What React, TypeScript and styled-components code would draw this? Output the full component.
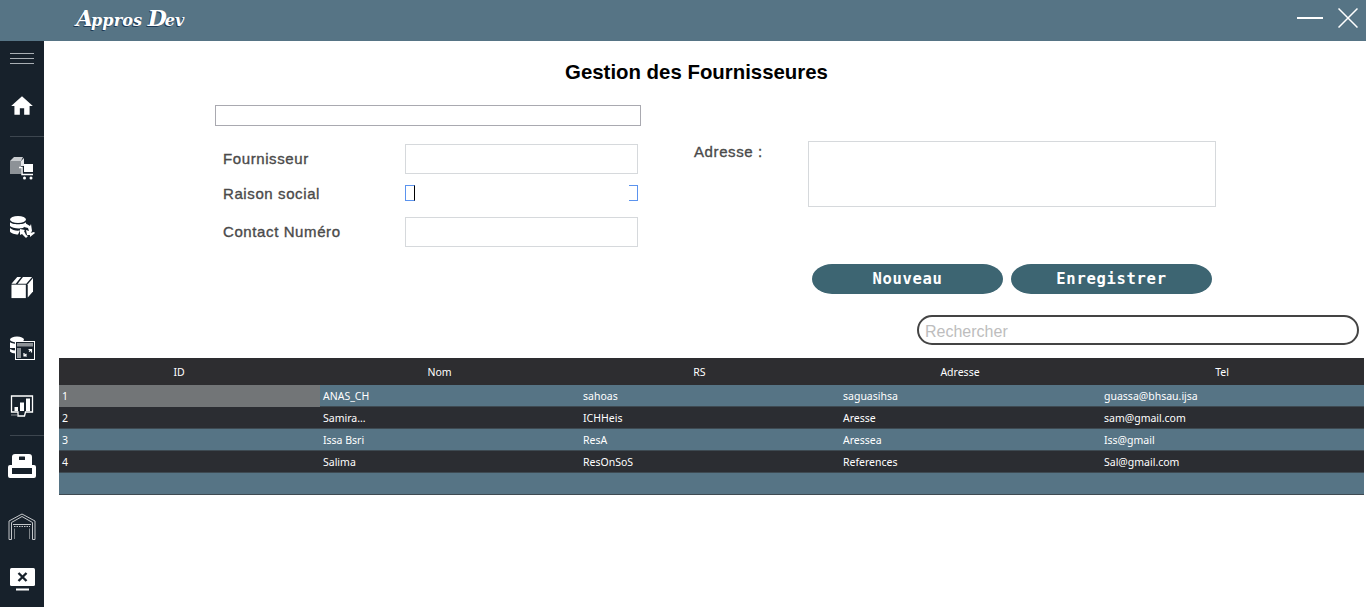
import styled, { createGlobalStyle } from "styled-components";
import { MdHome } from "react-icons/md";

const GlobalStyle = createGlobalStyle`
  html, body { margin: 0; padding: 0; background: #fff; }
  body { font-family: "Liberation Sans", Arial, sans-serif; overflow: hidden; }
`;

const Page = styled.div`
  width: 1366px;
  height: 607px;
  display: grid;
  grid-template-rows: 41px 1fr;
  grid-template-columns: 44px 1fr;
  overflow: hidden;
`;

const TitleBar = styled.header`
  grid-column: 1 / 3;
  display: flex;
  align-items: center;
  justify-content: space-between;
  background: #567485;
  padding: 0 8px 5px 76px;
`;

const Logo = styled.div`
  font-family: "DejaVu Serif", serif;
  font-style: italic;
  font-weight: 700;
  font-size: 16px;
  letter-spacing: 0.1px;
  color: #fff;
  text-shadow: -1px 1px 0 #1d3a55;
`;

const LogoCap = styled.span`
  font-size: 22px;
  letter-spacing: -2px;
`;

const WindowButtons = styled.div`
  display: flex;
  align-items: center;
  gap: 15px;
  color: #fff;
`;

const Sidebar = styled.nav`
  display: flex;
  flex-direction: column;
  background: #17212b;
  color: #fff;
`;

const MenuButton = styled.div`
  height: 35px;
  padding: 12px 10px 0;
  box-sizing: border-box;
  display: flex;
  flex-direction: column;
  gap: 4px;
`;

const MenuLine = styled.span`
  height: 1px;
  background: #a9afb4;
`;

const NavItem = styled.div<{ $h?: number }>`
  height: ${(p) => p.$h ?? 60}px;
  display: flex;
  align-items: center;
  justify-content: center;
  flex-shrink: 0;
`;

const NavDivider = styled.div`
  height: 1px;
  margin-left: 10px;
  background: #3d464f;
  flex-shrink: 0;
`;

const Main = styled.main`
  min-width: 0;
  display: flex;
  flex-direction: column;
  padding: 19px 2px 0 15px;
`;

const Heading = styled.h1`
  margin: 0 0 21px;
  padding-right: 30px;
  text-align: center;
  font-size: 20.4px;
  line-height: 25px;
  font-weight: 700;
  color: #000;
  height: 24px;
`;

const FormArea = styled.div`
  display: flex;
  padding-left: 156px;
  height: 159px;
`;

const LeftColumn = styled.div`
  width: 426px;
  display: flex;
  flex-direction: column;
`;

const SearchStrip = styled.div`
  height: 21px;
  box-sizing: border-box;
  border: 1px solid #a9a9b0;
  margin-bottom: 18px;
`;

const FieldRow = styled.div<{ $h: number; $mb: number; $labelLift?: number }>`
  display: flex;
  align-items: center;
  height: ${(p) => p.$h}px;
  margin-bottom: ${(p) => p.$mb}px;
  padding-left: 8px;

  label {
    padding-bottom: ${(p) => p.$labelLift ?? 0}px;
  }
`;

const Label = styled.label<{ $w?: number }>`
  width: ${(p) => p.$w ?? 182}px;
  flex-shrink: 0;
  font-size: 15px;
  letter-spacing: 0.6px;
  -webkit-text-stroke: 0.35px #4a4a4a;
  color: #4a4a4a;
`;

const TextBox = styled.div`
  width: 233px;
  height: 100%;
  box-sizing: border-box;
  border: 1px solid #d6d9dc;
`;

const FocusedBox = styled.div`
  width: 233px;
  height: 100%;
  display: flex;
  justify-content: space-between;
`;

const FocusLeft = styled.span`
  width: 10px;
  box-sizing: border-box;
  border: 1px solid #5b93ee;
  border-right: 1px solid #000;
`;

const FocusRight = styled.span`
  width: 9px;
  box-sizing: border-box;
  border: 1px solid #5b93ee;
  border-left: 0;
`;

const RightColumn = styled.div`
  display: flex;
  margin: 36px 0 0 53px;
`;

const AddressBox = styled.div`
  width: 408px;
  height: 66px;
  box-sizing: border-box;
  border: 1px solid #d6d9dc;
`;

const AddressLabel = styled(Label)`
  height: 22px;
  padding-top: 2px;
`;

const ButtonRow = styled.div`
  display: flex;
  gap: 8px;
  padding-left: 753px;
  height: 30px;
  margin-bottom: 21px;
`;

const ActionButton = styled.button<{ $w: number }>`
  width: ${(p) => p.$w}px;
  height: 30px;
  padding: 0;
  border: 0;
  border-radius: 20px / 15px;
  background: #3d6572;
  color: #fff;
  font-family: "DejaVu Sans Mono", monospace;
  font-size: 15.5px;
  font-weight: 700;
  letter-spacing: 0.7px;
`;

const SearchRow = styled.div`
  display: flex;
  justify-content: flex-end;
  padding-right: 5px;
  margin-bottom: 13px;
`;

const SearchBox = styled.div`
  width: 442px;
  height: 30px;
  box-sizing: border-box;
  border: 2px solid #444;
  border-radius: 15px;
  padding: 3px 0 0 6px;
  display: flex;
  align-items: center;
  font-size: 16px;
  color: #bdbdbd;
`;

const Grid = styled.table`
  width: 1305px;
  border-collapse: collapse;
  table-layout: fixed;
  font-family: "Noto Sans", sans-serif;
  font-size: 10.5px;
  color: #fff;
`;

const HeadRow = styled.tr`
  height: 27px;
  background: #2d2d30;
`;

const HeadCell = styled.th<{ $w: number }>`
  width: ${(p) => p.$w}px;
  font-weight: 400;
  padding: 0 21px 0 0;
  box-sizing: border-box;
  text-align: center;
`;

const BodyRow = styled.tr<{ $dark?: boolean }>`
  height: 22px;
  background: ${(p) => (p.$dark ? "#2b2d32" : "#567485")};
  box-shadow: inset 0 -1px 0 #3e4a52;
`;

const Cell = styled.td<{ $selected?: boolean }>`
  padding: 0 3px;
  white-space: nowrap;
  overflow: hidden;
  background: ${(p) => (p.$selected ? "#727577" : "transparent")};
`;

const rows = [
  ["1", "ANAS_CH", "sahoas", "saguasihsa", "guassa@bhsau.ijsa"],
  ["2", "Samira...", "ICHHeis", "Aresse", "sam@gmail.com"],
  ["3", "Issa Bsri", "ResA", "Aressea", "Iss@gmail"],
  ["4", "Salima", "ResOnSoS", "References", "Sal@gmail.com"],
];

const columns = [
  { name: "ID", width: 261 },
  { name: "Nom", width: 260 },
  { name: "RS", width: 260 },
  { name: "Adresse", width: 261 },
  { name: "Tel", width: 263 },
];

const CartIcon = () => (
  <svg width="24" height="24" viewBox="0 0 24 24">
    <path d="M0 5l4-4h9l-2 4z" fill="#c9cccf" />
    <rect x="0" y="5" width="11" height="13" fill="#8d9297" />
    <path d="M11 5l3-3v8h-3z" fill="#e4e5e7" />
    <path d="M9 11.500h3v7h11" fill="none" stroke="#fff" strokeWidth="1.500" />
    <rect x="14" y="8" width="9" height="8" fill="#fff" />
    <circle cx="14.500" cy="22" r="1.500" fill="#fff" />
    <circle cx="21" cy="22" r="1.500" fill="#fff" />
  </svg>
);

const DatabaseSyncIcon = () => (
  <svg width="25" height="25" viewBox="0 0 25 25" fill="#fff">
    <ellipse cx="8" cy="3.500" rx="8" ry="3.500" />
    <path d="M0 6c1 3 15 3 16 0v3l-3 3c-5 1-11 0-13-2z" />
    <path d="M0 12c2 2 6 3 10 2.500l-2 4c-3 0-7-1-8-3z" />
    <path d="M15 7l5 3 1-2 1 7-2 3 1 1h-4l-1-5 3 1-1-3-4-1z" />
    <path d="M10 13l5 1-1 1 2 4 2 1-2 2-1-1-3-3-2 1z" />
    <path d="M20 17l4-1 1 1-5 4z" />
  </svg>
);

const BoxIcon = () => (
  <svg width="24" height="23" viewBox="0 0 24 24" fill="#fff">
    <path d="M1 8h15v14H1z" />
    <path d="M18 7.500l5.500-6.500V15l-5.500 6.500z" />
    <path d="M1 7l6-7h4L5.500 7zM7.500 7L13 0h9.500l-6 7z" />
  </svg>
);

const DatabaseTableIcon = () => (
  <svg width="25" height="24" viewBox="0 0 25 24">
    <ellipse cx="7" cy="3.500" rx="7" ry="3" fill="#fff" />
    <path d="M0 6c1 2 12 3 14 0v1H6v5H0zM0 13c2 1 4 1.500 6 1.500v3c-3 0-5-1-6-2z" fill="#fff" />
    <rect x="5.500" y="5.500" width="19" height="18" fill="#17212b" stroke="#fff" />
    <rect x="7" y="7" width="16" height="3.500" fill="#8d9297" />
    <rect x="7" y="12" width="4" height="10" fill="#8d9297" />
    <path d="M14 20l2.500-2M19 15.500l2.500-2M14 17v3h3M18.500 13.500h3v3" fill="none" stroke="#fff" strokeWidth="1.200" />
  </svg>
);

const ChartIcon = () => (
  <svg width="24" height="23" viewBox="0 0 24 23">
    <path d="M1.500 1h21v16h-7l-1 4H8v-4H1.500z" fill="none" stroke="#fff" strokeWidth="1.300" />
    <rect x="4.500" y="12" width="3.500" height="4" fill="#fff" />
    <rect x="10" y="7.500" width="4" height="8.500" fill="#fff" />
    <rect x="16" y="3.500" width="4" height="12.500" fill="#fff" />
    <path d="M1 20h6" stroke="#8d9297" />
  </svg>
);

const TrayIcon = () => (
  <svg width="28" height="24" viewBox="0 0 28 24">
    <path d="M4 11V3a3 3 0 0 1 3-3h14a3 3 0 0 1 3 3v8h2a2 2 0 0 1 2 2v9a2 2 0 0 1-2 2H2a2 2 0 0 1-2-2v-9a2 2 0 0 1 2-2z" fill="#fff" />
    <rect x="11" y="2.500" width="6" height="3.500" rx="0.500" fill="#17212b" />
    <rect x="4" y="14" width="20" height="6" fill="#17212b" />
  </svg>
);

const WarehouseIcon = () => (
  <svg width="28" height="27" viewBox="0 0 28 27" fill="none" stroke="#c4c7ca" strokeWidth="1">
    <path d="M1 26.500V8l13-7 13 7v18.500" />
    <path d="M3.500 26.500V9.500L14 3.500l10.500 6v17" />
    <path d="M1 26.500h2.500M24.500 26.500H27" />
    <path d="M5 11.500h18" />
    <path d="M6 13.500h16" strokeDasharray="1.500 1" />
    <path d="M6.500 26V15.500M21.500 26V15.500" stroke="#7d8388" />
  </svg>
);

const MonitorCloseIcon = () => (
  <svg width="27" height="24" viewBox="0 0 27 24">
    <rect x="1" y="0" width="25" height="18" rx="1.500" fill="#fff" />
    <path d="M9.500 5l8 8m0-8l-8 8" stroke="#17212b" strokeWidth="2.400" />
    <rect x="7" y="20.500" width="13" height="2" fill="#fff" />
  </svg>
);

export default function App() {
  return (
    <Page>
      <GlobalStyle />
      <TitleBar>
        <Logo>
          <LogoCap>A</LogoCap>ppros <LogoCap>D</LogoCap>ev
        </Logo>
        <WindowButtons>
          <svg width="26" height="22" viewBox="0 0 26 22">
            <path d="M0 11h26" stroke="#fff" strokeWidth="2" />
          </svg>
          <svg width="20" height="20" viewBox="0 0 20 20">
            <path d="M0.500 0.500l19 19m0-19l-19 19" stroke="#fff" strokeWidth="1.500" />
          </svg>
        </WindowButtons>
      </TitleBar>
      <Sidebar>
        <MenuButton>
          <MenuLine />
          <MenuLine />
          <MenuLine />
        </MenuButton>
        <NavItem>
          <MdHome size={26} />
        </NavItem>
        <NavDivider />
        <NavItem $h={61}>
          <CartIcon />
        </NavItem>
        <NavItem>
          <DatabaseSyncIcon />
        </NavItem>
        <NavItem>
          <BoxIcon />
        </NavItem>
        <NavItem $h={59}>
          <DatabaseTableIcon />
        </NavItem>
        <NavItem $h={58}>
          <ChartIcon />
        </NavItem>
        <NavDivider />
        <NavItem>
          <TrayIcon />
        </NavItem>
        <NavItem>
          <WarehouseIcon />
        </NavItem>
        <NavItem $h={48}>
          <MonitorCloseIcon />
        </NavItem>
      </Sidebar>
      <Main>
        <Heading>Gestion des Fournisseures</Heading>
        <FormArea>
          <LeftColumn>
            <SearchStrip />
            <FieldRow $h={30} $mb={11} $labelLift={2}>
              <Label>Fournisseur</Label>
              <TextBox />
            </FieldRow>
            <FieldRow $h={16} $mb={16}>
              <Label>Raison social</Label>
              <FocusedBox>
                <FocusLeft />
                <FocusRight />
              </FocusedBox>
            </FieldRow>
            <FieldRow $h={30} $mb={0} $labelLift={2}>
              <Label>Contact Numéro</Label>
              <TextBox />
            </FieldRow>
          </LeftColumn>
          <RightColumn>
            <AddressLabel $w={114}>Adresse :</AddressLabel>
            <AddressBox />
          </RightColumn>
        </FormArea>
        <ButtonRow>
          <ActionButton $w={191}>Nouveau</ActionButton>
          <ActionButton $w={201}>Enregistrer</ActionButton>
        </ButtonRow>
        <SearchRow>
          <SearchBox>Rechercher</SearchBox>
        </SearchRow>
        <Grid>
          <thead>
            <HeadRow>
              {columns.map((c) => (
                <HeadCell key={c.name} $w={c.width}>
                  {c.name}
                </HeadCell>
              ))}
            </HeadRow>
          </thead>
          <tbody>
            {rows.map((r, i) => (
              <BodyRow key={r[0]} $dark={i % 2 === 1}>
                {r.map((v, j) => (
                  <Cell key={j} $selected={i === 0 && j === 0}>
                    {v}
                  </Cell>
                ))}
              </BodyRow>
            ))}
            <BodyRow>
              <Cell colSpan={5} />
            </BodyRow>
          </tbody>
        </Grid>
      </Main>
    </Page>
  );
}
